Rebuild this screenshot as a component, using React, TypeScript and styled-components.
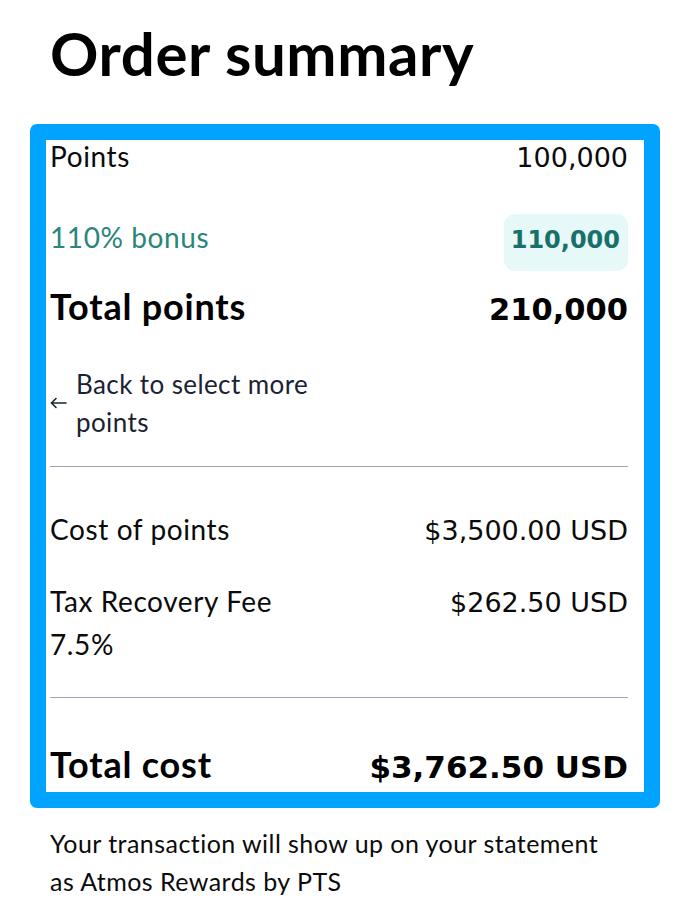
import React from "react";
import styled, { createGlobalStyle } from "styled-components";

const GlobalStyle = createGlobalStyle`
  html, body { margin: 0; padding: 0; background: #ffffff; }
  body { font-family: Lato, "Noto Sans", sans-serif; color: #000; }
  * { box-sizing: border-box; }
`;

const Page = styled.main`
  width: 690px;
  padding: 18px 30px 0 30px;
`;

const Title = styled.h1`
  margin: 0 0 0 20px;
  font-family: Lato, sans-serif;
  font-weight: 700;
  font-size: 60px;
  line-height: 70px;
  letter-spacing: 0.6px;
  color: #000;
`;

const Card = styled.section`
  margin-top: 36px;
  border: 16px solid #00a4ff;
  border-radius: 7px;
  padding: 0 16px 5px 4px;
  display: flex;
  flex-direction: column;
`;

const Row = styled.div<{ $top: number }>`
  display: flex;
  justify-content: space-between;
  align-items: baseline;
  margin-top: ${(p) => p.$top}px;
`;

const Label = styled.span<{ $tone?: "teal" | "default"; $lh?: number }>`
  font-family: Lato, sans-serif;
  font-size: 28px;
  letter-spacing: 0.6px;
  line-height: ${(p) => p.$lh ?? 32}px;
  font-weight: 400;
  color: ${(p) => (p.$tone === "teal" ? "#2a857c" : "#0b0b0b")};
  max-width: 280px;
`;

const StrongLabel = styled.span`
  font-family: Lato, sans-serif;
  font-size: 36px;
  letter-spacing: 0.8px;
  line-height: 40px;
  font-weight: 700;
  color: #000;
`;

const Value = styled.span`
  font-family: "DejaVu Sans", sans-serif;
  font-size: 27px;
  line-height: 32px;
  color: #0b0b0b;
  white-space: nowrap;
`;

const StrongValue = styled.span<{ $size: number }>`
  font-family: "DejaVu Sans", sans-serif;
  font-weight: 700;
  font-size: ${(p) => p.$size}px;
  line-height: 40px;
  color: #000;
  white-space: nowrap;
`;

const Badge = styled.span`
  font-family: "DejaVu Sans", sans-serif;
  font-weight: 700;
  font-size: 24px;
  line-height: 33px;
  padding: 10px 8px 14px 7px;
  border-radius: 11px;
  background: #e6f8f7;
  color: #17706a;
  white-space: nowrap;
`;

const BackLink = styled.a`
  margin-top: 35px;
  display: flex;
  align-items: center;
  gap: 9px;
  color: #1b2233;
  text-decoration: none;
  cursor: pointer;
`;

const BackText = styled.span`
  font-family: Lato, sans-serif;
  font-size: 26px;
  letter-spacing: 0.4px;
  line-height: 38px;
  width: 240px;
`;

const Divider = styled.hr<{ $top: number }>`
  margin: ${(p) => p.$top}px 0 0 0;
  border: none;
  height: 1px;
  background: #9ea5b7;
`;

const Footer = styled.p`
  margin: 16px 0 0 20px;
  font-family: Lato, sans-serif;
  font-size: 25px;
  letter-spacing: 0.45px;
  line-height: 38px;
  color: #0b0b0b;
  max-width: 560px;
`;

const ArrowLeft = () => (
  <svg width="17" height="12" viewBox="0 0 17 12" fill="none" stroke="#1b2233" strokeWidth="1.6" strokeLinecap="round" strokeLinejoin="round">
    <path d="M16 6H1.5" />
    <path d="M6 1.5L1.5 6L6 10.5" />
  </svg>
);

export default function App() {
  return (
    <>
      <GlobalStyle />
      <Page>
        <Title>Order summary</Title>
        <Card>
          <Row $top={0}>
            <Label>Points</Label>
            <Value>100,000</Value>
          </Row>
          <Row $top={40}>
            <Label $tone="teal">110% bonus</Label>
            <Badge>110,000</Badge>
          </Row>
          <Row $top={15}>
            <StrongLabel>Total points</StrongLabel>
            <StrongValue $size={30.5}>210,000</StrongValue>
          </Row>
          <BackLink>
            <ArrowLeft />
            <BackText>Back to select more points</BackText>
          </BackLink>
          <Divider $top={25} />
          <Row $top={41}>
            <Label $lh={43}>Cost of points</Label>
            <Value>$3,500.00 USD</Value>
          </Row>
          <Row $top={29}>
            <Label $lh={43}>
              Tax Recovery Fee
              <br />
              7.5%
            </Label>
            <Value>$262.50 USD</Value>
          </Row>
          <Divider $top={31} />
          <Row $top={46}>
            <StrongLabel>Total cost</StrongLabel>
            <StrongValue $size={31}>$3,762.50 USD</StrongValue>
          </Row>
        </Card>
        <Footer>Your transaction will show up on your statement as Atmos Rewards by PTS</Footer>
      </Page>
    </>
  );
}
